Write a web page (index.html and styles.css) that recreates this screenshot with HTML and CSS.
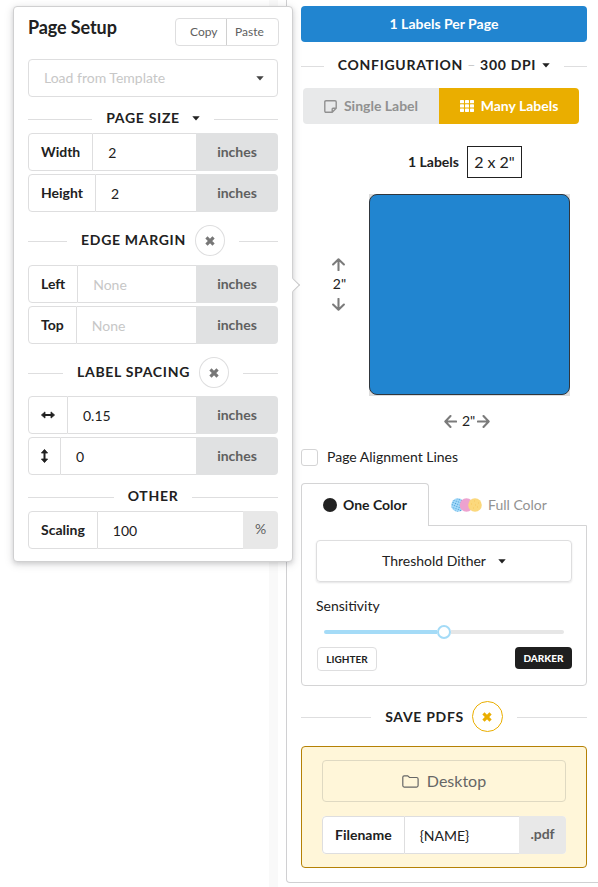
FILE: index.html
```html
<!DOCTYPE html>
<html lang="en">
<head>
<meta charset="utf-8">
<title>Page Setup</title>
<link rel="stylesheet" href="styles.css">
</head>
<body>
<svg class="defs" width="0" height="0">
  <defs>
    <symbol id="caret" viewBox="0 0 8 5"><path d="M0.3 0.3H7.7L4 4.5Z" fill="currentColor"/></symbol>
    <symbol id="times" viewBox="0 0 10 10"><path d="M2.6 2.6L7.4 7.4M7.4 2.6L2.6 7.4" stroke="currentColor" stroke-width="3.2" stroke-linecap="square"/></symbol>
    <symbol id="span" viewBox="0 0 14 8"><path d="M3 4H11" stroke="currentColor" stroke-width="2"/><path d="M0.4 4L4 .9V7.1ZM13.6 4L10 .9V7.1Z" fill="currentColor" stroke="currentColor" stroke-width=".8" stroke-linejoin="round"/></symbol>
    <symbol id="arrow" viewBox="0 0 12 12"><path d="M6 11.2V1.4M1 6L6 1.2L11 6" fill="none" stroke="currentColor" stroke-width="1.9" stroke-linecap="round" stroke-linejoin="round"/></symbol>
    <pattern id="dots" width="2.4" height="2.4" patternUnits="userSpaceOnUse" patternTransform="rotate(20)"><circle cx="1.2" cy="1.2" r=".65" fill="#3f9bd3"/></pattern>
  </defs>
</svg>
<div class="app">
  <div class="gutter"></div>
  <main class="panel">
    <button class="count">1 Labels Per Page</button>
    <div class="divider config"><span>Configuration <i>–</i> 300 DPI</span><svg class="caret"><use href="#caret"/></svg></div>
    <div class="modes">
      <button class="mode single"><svg width="13" height="13" viewBox="0 0 13 13"><path d="M2 .8H11Q12.2 .8 12.2 2V8.2L8.2 12.2H2Q.8 12.2 .8 11V2Q.8 .8 2 .8ZM12 8.2H9Q8.2 8.2 8.2 9V12" fill="none" stroke="currentColor" stroke-width="1.4"/></svg>Single Label</button>
      <button class="mode many"><svg width="14" height="12" viewBox="0 0 14 12" fill="#fff"><rect width="4" height="3.3" rx=".6"/><rect x="5" width="4" height="3.3" rx=".6"/><rect x="10" width="4" height="3.3" rx=".6"/><rect y="4.3" width="4" height="3.3" rx=".6"/><rect x="5" y="4.3" width="4" height="3.3" rx=".6"/><rect x="10" y="4.3" width="4" height="3.3" rx=".6"/><rect y="8.6" width="4" height="3.3" rx=".6"/><rect x="5" y="8.6" width="4" height="3.3" rx=".6"/><rect x="10" y="8.6" width="4" height="3.3" rx=".6"/></svg>Many Labels</button>
    </div>
    <div class="summary"><b>1 Labels</b><span class="dims">2 x 2"</span></div>
    <div class="preview">
      <div class="tall"><svg class="arrow"><use href="#arrow"/></svg><span>2"</span><svg class="arrow down"><use href="#arrow"/></svg></div>
      <div class="page"><div class="label"></div></div>
    </div>
    <div class="wide"><svg class="arrow left"><use href="#arrow"/></svg><span>2"</span><svg class="arrow right"><use href="#arrow"/></svg></div>
    <label class="check"><span class="box"></span>Page Alignment Lines</label>
    <div class="tabs">
      <div class="tab active"><span class="dot"></span>One Color</div>
      <div class="tab"><svg width="31" height="14" viewBox="0 0 31 14"><circle cx="7" cy="7" r="6.8" fill="#a5dafa"/><circle cx="7" cy="7" r="6.8" fill="url(#dots)"/><circle cx="15.5" cy="7" r="6.8" fill="#eda2cf"/><circle cx="24" cy="7" r="6.8" fill="#fbd87c"/><path d="M20 6h1M23 3h1M27 5h1M26 9h1M22 10h1M24 7h1" stroke="#f8c75d"/></svg>Full Color</div>
    </div>
    <section class="color">
      <button class="dither">Threshold Dither<svg class="caret"><use href="#caret"/></svg></button>
      <div class="sens">Sensitivity</div>
      <div class="slider"><div class="fill"></div><div class="thumb"></div><div class="rest"></div></div>
      <div class="ends"><span class="lighter">LIGHTER</span><span class="darker">DARKER</span></div>
    </section>
    <div class="divider save"><span>Save PDFs</span><button class="round gold"><svg class="times"><use href="#times"/></svg></button></div>
    <section class="output">
      <button class="folder"><svg width="17" height="13" viewBox="0 0 17 13"><path d="M2.2 .8H5.7L7.5 2.5H14.6Q16.1 2.5 16.1 4V10.6Q16.1 12.1 14.6 12.1H2.2Q.8 12.1 .8 10.6V2.2Q.8 .8 2.2 .8Z" fill="none" stroke="currentColor" stroke-width="1.2"/></svg>Desktop</button>
      <div class="field filename"><b>Filename</b><span class="value">{NAME}</span><em class="unit light">.pdf</em></div>
    </section>
  </main>

  <aside class="popup">
    <header class="head"><h1>Page Setup</h1><div class="clip"><span class="copy">Copy</span><span class="paste">Paste</span></div></header>
    <div class="template">Load from Template<svg class="caret"><use href="#caret"/></svg></div>
    <div class="divider size"><span>Page Size</span><svg class="caret"><use href="#caret"/></svg></div>
    <div class="field"><b>Width</b><span class="value">2</span><em class="unit">inches</em></div>
    <div class="field"><b>Height</b><span class="value">2</span><em class="unit">inches</em></div>
    <div class="divider tallrow edge"><span>Edge Margin</span><button class="round"><svg class="times"><use href="#times"/></svg></button></div>
    <div class="field"><b>Left</b><span class="value empty">None</span><em class="unit">inches</em></div>
    <div class="field"><b>Top</b><span class="value empty">None</span><em class="unit">inches</em></div>
    <div class="divider tallrow spacing"><span>Label Spacing</span><button class="round"><svg class="times"><use href="#times"/></svg></button></div>
    <div class="field"><b><svg width="14" height="8"><use href="#span"/></svg></b><span class="value">0.15</span><em class="unit">inches</em></div>
    <div class="field"><b><svg width="7" height="14" viewBox="0 0 7 14"><g transform="translate(7.5 0) rotate(90)"><use href="#span" width="14" height="8"/></g></svg></b><span class="value">0</span><em class="unit">inches</em></div>
    <div class="divider other"><span>Other</span></div>
    <div class="field"><b>Scaling</b><span class="value">100</span><em class="unit light percent">%</em></div>
    <div class="pointer"></div>
  </aside>
</div>
</body>
</html>
```
FILE: styles.css
```css
* { box-sizing: border-box; }
body { margin: 0; background: #fff; color: #212121; font: 14px/20px Lato, "Liberation Sans", sans-serif; overflow: hidden; }
button { font: inherit; color: inherit; border: 0; background: none; padding: 0; margin: 0; display: flex; align-items: center; justify-content: center; }
svg { flex: none; display: block; }
.defs { position: absolute; }
.app { position: relative; width: 598px; height: 887px; display: flex; overflow: hidden; }
.gutter { flex: none; width: 9px; margin: 0 8px 0 269px; background: #f9f9f9; }
.panel { flex: none; width: 340px; height: 883px; padding: 6px 0 0 14px; border: 1px solid #d0d0d2; border-top: 0; border-radius: 0 0 0 4px; }
.panel > * { width: 286px; }

.caret { width: 8px; height: 5px; }
.times { width: 10px; height: 10px; }
.divider { display: flex; align-items: center; font-weight: 700; text-transform: uppercase; letter-spacing: .7px; white-space: nowrap; }
.divider::before, .divider::after { content: ""; flex: 1; height: 1px; background: #dededf; position: relative; top: 1px; }
.divider::before { margin-right: 14px; }
.divider::after { margin-left: 14px; }
.round { width: 30px; height: 31px; border: 1px solid #dededf; border-radius: 50%; color: #777; margin-left: 9px; }
.round.gold { width: 31px; border-color: #eaae00; color: #eaae00; margin-left: 8px; }

.count { height: 36px; border-radius: 4px; background: #2185d0; color: #fff; font-weight: 700; }
.config { height: 20px; margin-top: 13px; }
.config i { color: #c7c7c7; font-style: normal; font-weight: 400; }
.config .caret { margin-left: 6px; }
.modes { display: flex; height: 36px; margin-top: 13px; padding-left: 2px; }
.mode { font-weight: 700; }
.mode svg { margin-right: 7px; }
.single { width: 136px; border-radius: 4px 0 0 4px; background: #e8e9ea; color: #919191; }
.many { width: 140px; border-radius: 0 4px 4px 0; background: #eaae00; color: #fff; }
.summary { display: flex; align-items: center; height: 32px; margin-top: 22px; padding-left: 107px; }
.dims { width: 55px; height: 32px; margin-left: 8px; border: 1px solid #212121; font-size: 16px; line-height: 30px; text-align: center; }
.preview { display: flex; align-items: center; margin-top: 16px; padding-left: 31px; }
.tall { width: 14px; display: flex; flex-direction: column; align-items: center; margin: -22px 23px 0 -1px; padding-right: 1px; box-sizing: content-box; }
.tall span { line-height: 16px; margin: 5px 0 6px 3px; }
.arrow { width: 13px; height: 13px; color: #7b7b7b; }
.down { transform: rotate(180deg); }
.left { transform: rotate(-90deg); }
.right { transform: rotate(90deg); }
.page { width: 201px; height: 202px; background: #ddd; }
.label { height: 201px; border: 1px solid #30363d; border-radius: 8px; background: #2185d0; }
.wide { display: flex; align-items: center; height: 20px; margin-top: 15px; padding-left: 143px; }
.wide span { margin: 0 2px 0 5px; }
.check { display: flex; align-items: center; height: 20px; margin-top: 16px; }
.box { width: 17px; height: 17px; margin-right: 9px; border: 1px solid #d4d4d5; border-radius: 3px; }

.tabs { display: flex; height: 43px; margin-top: 16px; position: relative; }
.tab { display: flex; align-items: center; height: 43px; padding-left: 22px; color: #929292; }
.tab svg { margin-right: 6px; }
.tab.active { width: 128px; padding-left: 21px; border: 1px solid #d4d4d5; border-bottom: 0; border-radius: 4px 4px 0 0; background: #fff; color: #1d1d1d; font-weight: 700; }
.dot { width: 14px; height: 14px; margin-right: 6px; border-radius: 50%; background: #212121; }
.color { height: 161px; margin-top: -1px; padding: 14px; border: 1px solid #d4d4d5; border-radius: 0 0 4px 4px; }
.dither { width: 256px; height: 42px; border: 1px solid #dededf; border-radius: 4px; box-shadow: 0 1px 2px #2224261f; }
.dither .caret { margin-left: 12px; }
.sens { margin-top: 14px; }
.slider { display: flex; align-items: center; height: 16px; margin: 8px 8px 0; }
.fill { width: 113px; height: 4px; border-radius: 2px 0 0 2px; background: #a4dbf7; }
.thumb { width: 14px; height: 14px; border: 2px solid #a4dbf7; border-radius: 50%; }
.rest { flex: 1; height: 4px; border-radius: 0 2px 2px 0; background: #e6e6e6; }
.ends { display: flex; justify-content: space-between; align-items: flex-start; margin-top: 7px; padding-left: 1px; font-size: 10px; font-weight: 700; text-align: center; }
.lighter { width: 60px; height: 24px; line-height: 23px; border: 1px solid #dededf; border-radius: 4px; }
.darker { width: 57px; height: 22px; line-height: 22px; border-radius: 4px; background: #1f1f1f; color: #fff; font-weight: 900; }

.save { height: 31px; margin-top: 15px; }
.output { height: 122px; margin-top: 14px; padding: 13px 20px; border: 1px solid #b58105; border-radius: 4px; background: #fff6d9; }
.folder { width: 244px; height: 42px; border: 1px solid #dfd9c2; border-radius: 4px; color: #666; font-size: 16px; }
.folder svg { margin-right: 8px; }
.filename { width: 244px; margin-top: 14px; }

.popup { position: absolute; left: 13px; top: 6px; width: 280px; height: 556px; padding: 12px 14px; border: 1px solid #d0d0d1; border-radius: 4px; background: #fff; box-shadow: 0 2px 4px #2224261f, 0 2px 10px #22242626; }
.popup > .field + .field { margin-top: 3px; }
.head { display: flex; justify-content: space-between; height: 27px; margin: -1px -1px 0 0; }
h1 { margin: 0; font-size: 18px; line-height: 18px; letter-spacing: -.1px; }
.clip { display: flex; width: 104px; height: 28px; border: 1px solid #dededf; border-radius: 4px; color: #606060; font-size: 12px; line-height: 26px; }
.copy { width: 51px; padding-left: 14px; border-right: 1px solid #d0d0d0; }
.paste { padding-left: 8px; }
.template { display: flex; align-items: center; justify-content: space-between; height: 38px; margin-top: 14px; padding: 0 13px 0 15px; border: 1px solid #dededf; border-radius: 4px; color: #c7c7c7; }
.template .caret { color: #444; }
.size { height: 20px; margin: 11px 0 5px; }
.size .caret { margin-left: 12px; }
.tallrow { height: 31px; margin: 13px 0 8px; }
.tallrow span { padding-bottom: 2px; }
.edge { margin-bottom: 9px; }
.other { height: 20px; margin: 11px 0 5px; }
.field { display: flex; height: 38px; background: #fff; border-radius: 4px; line-height: 36px; }
.field b { display: flex; align-items: center; padding: 0 12px 0 12px; border: 1px solid #dededf; border-radius: 4px 0 0 4px; }
.value { flex: 1; padding: 1px 0 0 15px; border: solid #dededf; border-width: 1px 0; line-height: 36px; }
.empty { color: #c7c7c7; }
.unit { width: 82px; border-radius: 0 4px 4px 0; background: #e0e1e2; color: #5f5f5f; font-style: normal; font-weight: 700; text-align: center; line-height: 38px; }
.unit.light { width: 47px; background: #e8e8e8; line-height: 36px; }
.unit.percent { width: 35px; font-weight: 400; }
.pointer { position: absolute; right: -6px; top: 273px; width: 10px; height: 10px; border: solid #c9c9ca; border-width: 1px 1px 0 0; background: #fff; transform: rotate(45deg); }
```
